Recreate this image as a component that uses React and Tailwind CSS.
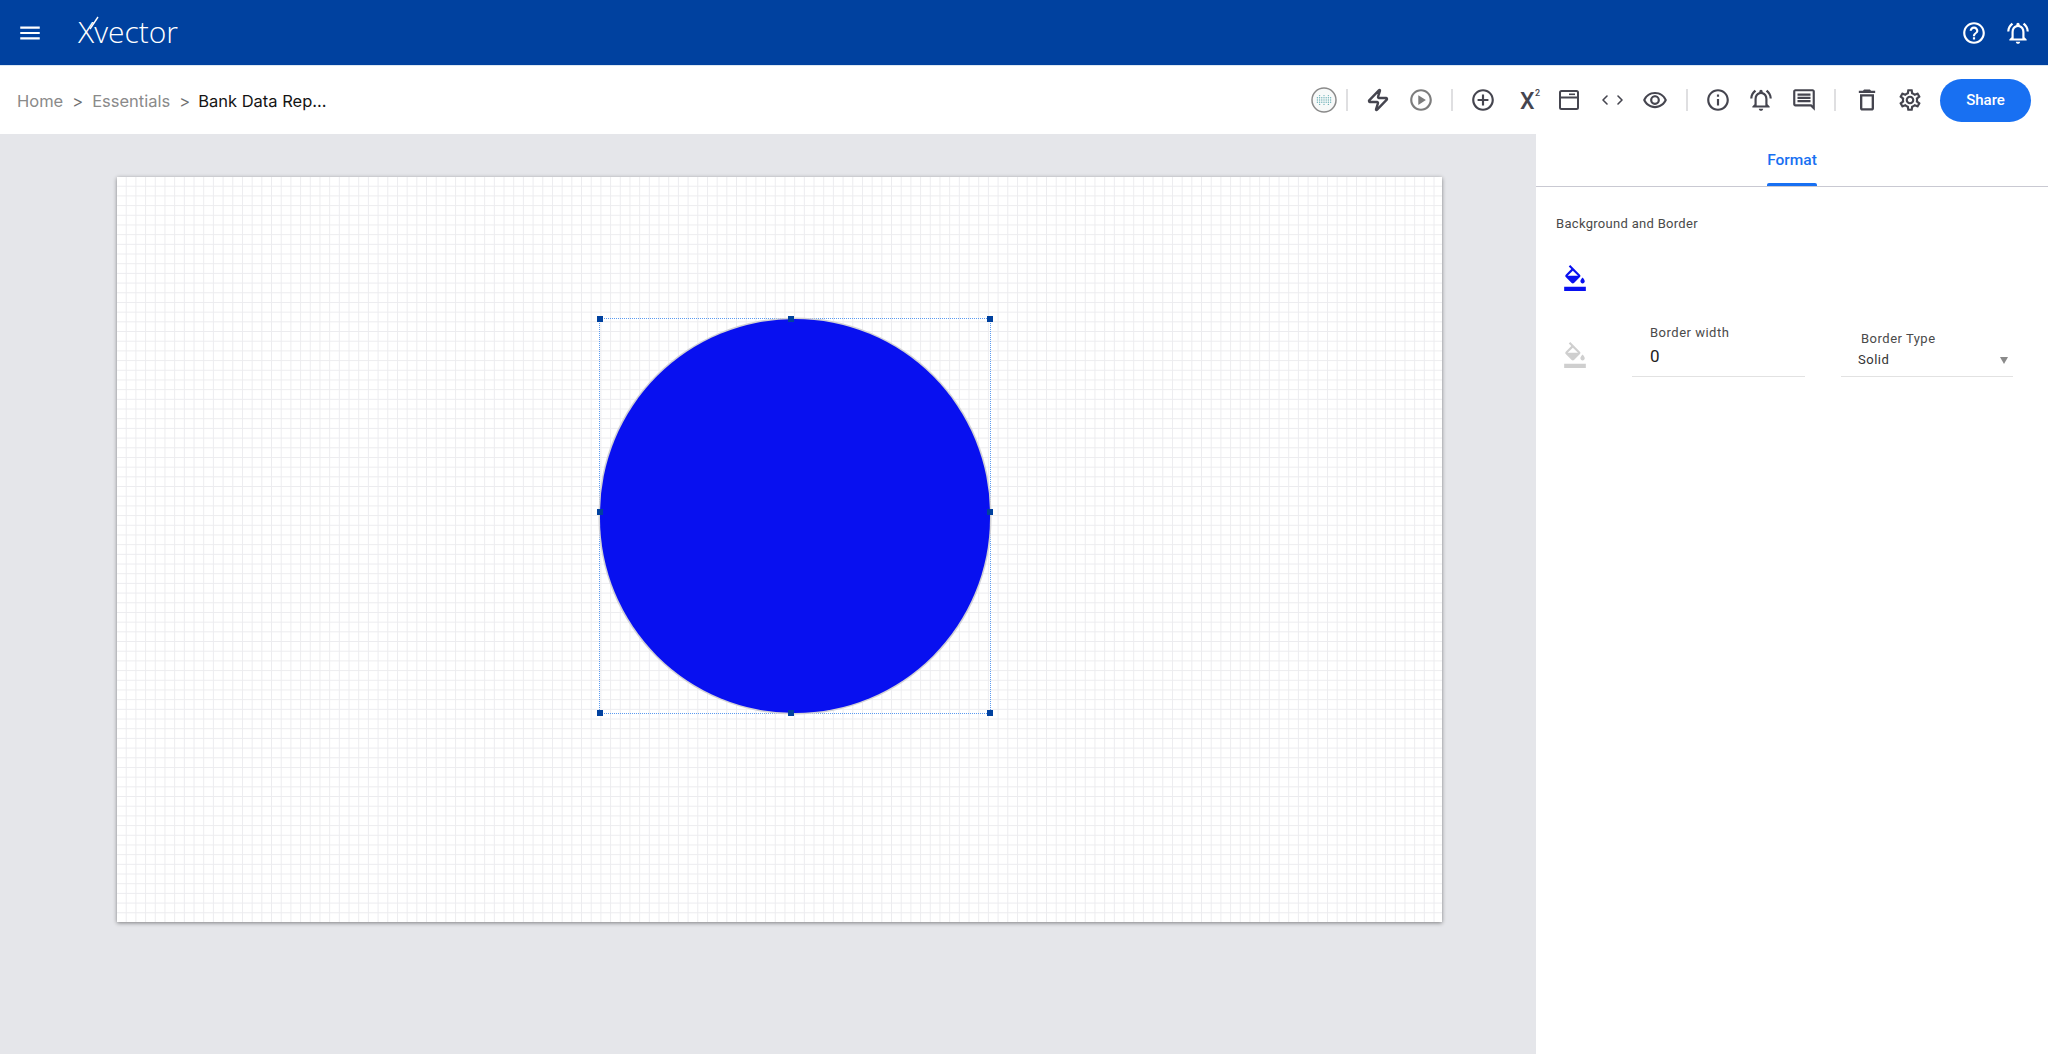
import React from 'react';
import {
    MdMenu, MdHelpOutline, MdOutlineNotificationsActive, MdOutlinePlayCircle, MdAddCircleOutline,
    MdOutlineRemoveRedEye, MdInfoOutline, MdOutlineDelete, MdOutlineSettings, MdFormatColorFill, MdOutlineComment,
} from 'react-icons/md';
import { Zap, ChevronLeft, ChevronRight } from 'lucide-react';

const handles = [
    'left-[-3px] top-[-3px]', 'left-[188px] top-[-3px]', 'right-[-3px] top-[-3px]',
    'left-[-3px] top-[190px]', 'right-[-3px] top-[190px]',
    'left-[-3px] bottom-[-3px]', 'left-[188px] bottom-[-3px]', 'right-[-3px] bottom-[-3px]',
];

function Separator({ className }) {
    return <div className={`w-[2px] h-[22px] bg-[#dfdfe1] ${className}`} />;
}

function Avatar() {
    const dots = [];
    for (let r = 0; r < 5; r++) {
        for (let c = 0; c < 7; c++) {
            if ((r === 0 || r === 4) && c % 2 === 0) continue;
            dots.push(<circle key={`${r}-${c}`} cx={6.4 + c * 2.2} cy={8.6 + r * 2.2} r="0.7" fill="#6fb2b8" />);
        }
    }
    return (
        <svg width="26" height="26" viewBox="0 0 26 26" className="shrink-0">
            <circle cx="13" cy="13" r="12" fill="#f7f9f9" stroke="#8a8a8a" strokeWidth="1.5" />
            {dots}
        </svg>
    );
}

function WindowIcon() {
    return (
        <svg width="20" height="20" viewBox="0 0 20 20" fill="none" stroke="#45454f" strokeWidth="2" className="shrink-0">
            <rect x="1" y="1" width="18" height="18" rx="1.5" />
            <path d="M1 7.5h18" />
            <path d="M10 4.3h6" strokeWidth="1.6" />
        </svg>
    );
}

export default function App() {
    return (
        <div className="w-[2048px] h-[1054px] flex flex-col overflow-hidden bg-white font-['Roboto',sans-serif]">
            {/* top bar */}
            <header className="h-[65px] shrink-0 bg-[#00419f] flex items-center text-white pl-[17px] pr-[17px]">
                <MdMenu size={26} className="shrink-0" />
                <div className="relative ml-[35px] mb-[2px] font-['Open_Sans',sans-serif] font-light text-[30px] leading-[31px]">
                    Xvector
                    <svg width="10" height="14" viewBox="0 0 10 14" className="absolute left-[11px] top-0">
                        <path d="M1 13 L9 1" stroke="white" strokeWidth="1.4" fill="none" />
                    </svg>
                </div>
                <div className="ml-auto flex items-center gap-[18px]">
                    <MdHelpOutline size={26} />
                    <MdOutlineNotificationsActive size={26} />
                </div>
            </header>

            {/* breadcrumb and tools */}
            <div className="h-[69px] shrink-0 border-t border-[#dbe7f3] flex items-center pl-[17px] pr-[17px] font-['Inter',sans-serif] text-[16.5px]">
                <span className="text-[#8a8a8a] mt-[2px]">Home</span>
                <span className="text-[#6f6f6f] ml-[9px] mt-[2px]">&gt;</span>
                <span className="text-[#8a8a8a] ml-[9px] mt-[2px]">Essentials</span>
                <span className="text-[#6f6f6f] ml-[9px] mt-[2px]">&gt;</span>
                <span className="text-[#141414] ml-[8px] mt-[2px]">Bank Data Rep...</span>

                <div className="ml-auto flex items-center text-[#45454f]">
                    <Avatar />
                    <Separator className="ml-[9px]" />
                    <Zap size={24} strokeWidth={2.4} className="ml-[18px] shrink-0" />
                    <MdOutlinePlayCircle size={26} className="ml-[18px] text-[#7d7d7d] shrink-0" />
                    <Separator className="ml-[17px]" />
                    <MdAddCircleOutline size={26} className="ml-[17px] shrink-0" />
                    <span className="ml-[24px] mt-[3px] w-[20px] relative font-['Roboto',sans-serif] font-medium text-[23px] leading-none">
                        X<sup className="absolute left-[15px] top-[-1px] text-[9px] leading-none">2</sup>
                    </span>
                    <span className="ml-[19px]"><WindowIcon /></span>
                    <span className="ml-[18px] flex shrink-0">
                        <ChevronLeft size={16} strokeWidth={2.4} className="-mr-[1px]" />
                        <ChevronRight size={16} strokeWidth={2.4} />
                    </span>
                    <MdOutlineRemoveRedEye size={26} className="ml-[14px] shrink-0" />
                    <Separator className="ml-[18px]" />
                    <MdInfoOutline size={26} className="ml-[17px] shrink-0" />
                    <MdOutlineNotificationsActive size={26} className="ml-[17px] shrink-0" />
                    <MdOutlineComment size={26} className="ml-[17px] shrink-0" />
                    <Separator className="ml-[17px]" />
                    <MdOutlineDelete size={28} className="ml-[17px] shrink-0" />
                    <MdOutlineSettings size={26} className="ml-[16px] shrink-0" />
                    <button className="ml-[17px] w-[91px] h-[43px] rounded-full bg-[#1870f2] text-white font-['Roboto',sans-serif] font-medium text-[15px]">
                        Share
                    </button>
                </div>
            </div>

            <div className="flex-1 flex min-h-0">
                {/* canvas area */}
                <main className="w-[1536px] bg-[#e5e6ea] pl-[117px] pt-[43px]">
                    <div className="relative w-[1325px] h-[745px] bg-white shadow-[0_1px_4px_rgba(0,0,0,0.45)] bg-[linear-gradient(to_right,transparent_calc(100%-1px),#ececef_calc(100%-1px)),linear-gradient(to_bottom,transparent_calc(100%-1px),#ececef_calc(100%-1px))] bg-[size:9.7px_9.7px]">
                        <div className="absolute left-[482px] top-[141px] w-[392px] h-[396px] border border-dotted border-[#5c9bf0]">
                            <div className="w-full h-full rounded-full bg-[#0810f0] shadow-[0_0_0_1.5px_#d2d2d6]" />
                            {handles.map((pos) => (
                                <div key={pos} className={`absolute w-[6px] h-[6px] bg-[#00419f] ${pos}`} />
                            ))}
                        </div>
                    </div>
                </main>

                {/* format panel */}
                <aside className="w-[512px] bg-white flex flex-col">
                    <div className="h-[53px] shrink-0 border-b border-[#c9c9d2] flex justify-center">
                        <div className="relative w-[50px] flex justify-center pt-[16px] text-[15.5px] leading-[20px] font-medium text-[#1870f2]">
                            Format
                            <div className="absolute left-0 right-0 bottom-0 h-[3px] rounded-t-[2px] bg-[#1870f2]" />
                        </div>
                    </div>
                    <div className="pl-[20px] pr-[35px]">
                        <p className="mt-[29px] text-[13px] leading-[16px] tracking-[0.3px] text-[#4a4a4a]">Background and Border</p>
                        <MdFormatColorFill preserveAspectRatio="none" className="mt-[33px] ml-[6px] w-[26px] h-[26px] text-[#0810f0]" />
                        <div className="flex mt-[33px] items-end">
                            <MdFormatColorFill preserveAspectRatio="none" className="ml-[6px] mb-[9px] w-[26px] h-[26px] text-[#cfcfcf] shrink-0" />
                            <div className="ml-[44px] w-[173px] h-[53px] border-b border-[#e2e2e2] pl-[18px] pt-[1px]">
                                <p className="text-[13px] leading-[16px] tracking-[0.5px] text-[#4a4a4a]">Border width</p>
                                <p className="mt-[5px] text-[17px] leading-[20px] text-[#222]">0</p>
                            </div>
                            <div className="ml-[36px] w-[172px] h-[46px] border-b border-[#e2e2e2] pl-[17px] pr-[2px]">
                                <p className="pl-[3px] text-[13px] leading-[16px] tracking-[0.5px] text-[#4a4a4a]">Border Type</p>
                                <div className="mt-[5px] flex items-center justify-between text-[13px] leading-[16px] tracking-[0.5px] text-[#333]">
                                    <span>Solid</span>
                                    <span className="w-0 h-0 border-x-[4px] border-x-transparent border-t-[7px] border-t-[#8a8a8a] mr-[3px]" />
                                </div>
                            </div>
                        </div>
                    </div>
                </aside>
            </div>
        </div>
    );
}
